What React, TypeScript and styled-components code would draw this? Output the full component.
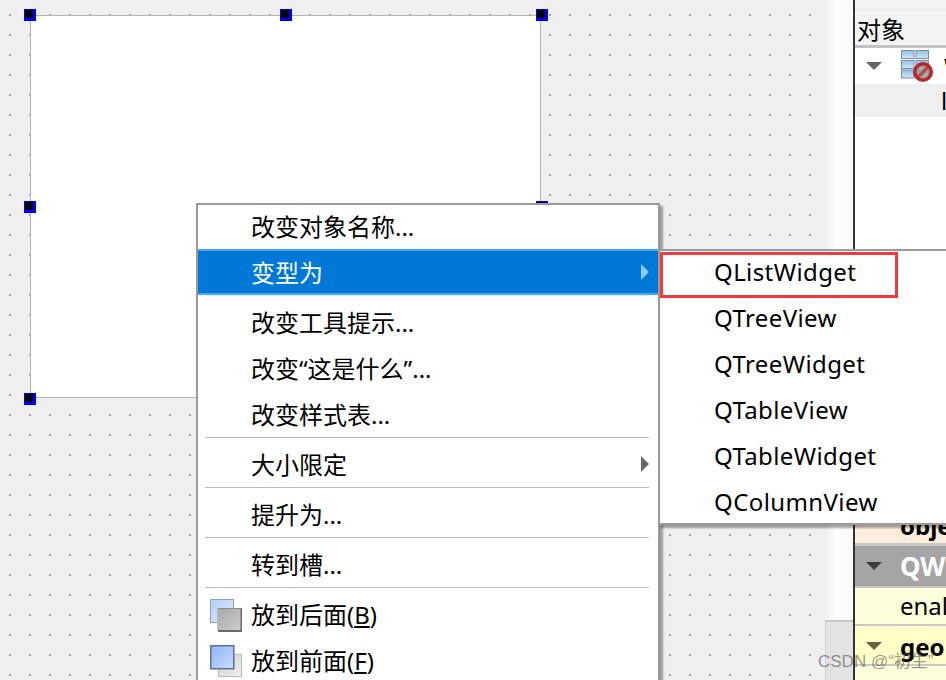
import React, { FC } from "react";
import styled, { createGlobalStyle } from "styled-components";

const GlobalStyle = createGlobalStyle`
  html, body {
    margin: 0;
    padding: 0;
    background: #efefef;
  }
  body {
    width: 946px;
    height: 680px;
    overflow: hidden;
    font-family: "Noto Sans", "Noto Sans CJK SC", sans-serif;
  }
`;

// selection handles around the form, the last two sit right at the menu edge
const HANDLES = [
  { x: 24, y: 9 },
  { x: 280, y: 9 },
  { x: 536, y: 9 },
  { x: 24, y: 201 },
  { x: 536, y: 201 },
  { x: 24, y: 393 },
];

const SUBMENU = ["QListWidget", "QTreeView", "QTreeWidget", "QTableView", "QTableWidget", "QColumnView"];

const BackIcon: FC = () => (
  <svg width="32" height="33" viewBox="0 0 32 33">
    <defs>
      <linearGradient id="backBlue" x1="0" y1="0" x2="1" y2="1">
        <stop offset="0" stopColor="#b5cdf8" />
        <stop offset="1" stopColor="#e3ebfb" />
      </linearGradient>
      <linearGradient id="backGray" x1="0" y1="0" x2="1" y2="1">
        <stop offset="0" stopColor="#a8a8a8" />
        <stop offset="1" stopColor="#cfcfcf" />
      </linearGradient>
    </defs>
    <rect x="0.5" y="0.5" width="23" height="23" fill="url(#backBlue)" stroke="#93a3bd" />
    <rect x="8.5" y="9.5" width="23" height="22" fill="url(#backGray)" stroke="#e2e2e2" />
    <path d="M8 32 H31.5 V9" fill="none" stroke="#6b6b6b" strokeWidth="2" />
    <path d="M8 32 V9.5 H31" fill="none" stroke="#8c8c8c" />
  </svg>
);

const FrontIcon: FC = () => (
  <svg width="32" height="33" viewBox="0 0 32 33">
    <defs>
      <linearGradient id="frontBlue" x1="0" y1="0" x2="1" y2="1">
        <stop offset="0" stopColor="#8fb6fa" />
        <stop offset="1" stopColor="#c9dcfb" />
      </linearGradient>
      <linearGradient id="frontGray" x1="0" y1="0" x2="1" y2="1">
        <stop offset="0" stopColor="#cfcfcf" />
        <stop offset="1" stopColor="#f0f0f0" />
      </linearGradient>
    </defs>
    <rect x="8.5" y="9.5" width="23" height="22" fill="url(#frontGray)" stroke="#b9b9b9" />
    <rect x="0.75" y="0.75" width="23" height="23" fill="url(#frontBlue)" stroke="#5d7194" strokeWidth="1.5" />
  </svg>
);

const TableIcon: FC = () => (
  <svg width="33" height="32" viewBox="0 0 33 32">
    <defs>
      <linearGradient id="cell" x1="0" y1="0" x2="0" y2="1">
        <stop offset="0" stopColor="#8cc2f0" />
        <stop offset="1" stopColor="#d8e6f2" />
      </linearGradient>
    </defs>
    <g fill="url(#cell)" stroke="#7b8ea6">
      <rect x="0.5" y="0.5" width="12.5" height="8" />
      <rect x="15" y="0.5" width="12.5" height="8" />
      <rect x="0.5" y="10.5" width="12.5" height="8" />
      <rect x="15" y="10.5" width="12.5" height="8" />
      <rect x="0.5" y="20" width="12.5" height="8" />
    </g>
    <circle cx="22" cy="22" r="10" fill="#b5282d" />
    <circle cx="22" cy="22" r="6.5" fill="#9c9c9c" />
    <path d="M17.5 26.5 L26.5 17.5" stroke="#c43a3e" strokeWidth="2.5" />
    <path d="M19 20 L22 17.5 M23 27 L27 23" stroke="#c9c9c9" strokeWidth="1" />
  </svg>
);

const App: FC = () => {
  return (
    <>
      <GlobalStyle />
      <Page>
        <Canvas>
          <Form />
          {HANDLES.map((h) => (
            <Handle key={`${h.x}-${h.y}`} $x={h.x} $y={h.y} />
          ))}
        </Canvas>
        <Scrollbar>
          <ScrollThumb />
          <ScrollTrack />
        </Scrollbar>
        <Inspector>
          <PanelTop />
          <ObjectHeader>对象</ObjectHeader>
          <TreeRow>
            <Arrow />
            <TreeIcon>
              <TableIcon />
            </TreeIcon>
            <TreeText>W</TreeText>
          </TreeRow>
          <TreeChild>l</TreeChild>
          <PanelBlank />
          <ObjectRow>obje</ObjectRow>
          <GroupRow>
            <SmallArrow />
            QW
          </GroupRow>
          <EnabledRow>enal</EnabledRow>
          <GeometryRow>
            <OliveArrow />
            geo
          </GeometryRow>
          <LastRow />
        </Inspector>

        <Menu>
          <MenuItem>改变对象名称...</MenuItem>
          <MenuItem $active>
            变型为
            <SubArrow $active />
          </MenuItem>
          <MenuGap />
          <MenuItem>改变工具提示...</MenuItem>
          <MenuItem>改变“这是什么”...</MenuItem>
          <MenuItem>改变样式表...</MenuItem>
          <Separator />
          <MenuItem>
            大小限定
            <SubArrow />
          </MenuItem>
          <Separator />
          <MenuItem>提升为...</MenuItem>
          <Separator />
          <MenuItem>转到槽...</MenuItem>
          <Separator />
          <MenuItem>
            <MenuIcon>
              <BackIcon />
            </MenuIcon>
            放到后面(<u>B</u>)
          </MenuItem>
          <MenuItem>
            <MenuIcon>
              <FrontIcon />
            </MenuIcon>
            放到前面(<u>F</u>)
          </MenuItem>
        </Menu>

        <SubMenu>
          {SUBMENU.map((name) => (
            <SubItem key={name}>{name}</SubItem>
          ))}
          <Highlight />
        </SubMenu>

        <Watermark>CSDN @“初生”</Watermark>
      </Page>
    </>
  );
};

const Page = styled.div`
  position: relative;
  display: flex;
  width: 946px;
  height: 680px;
  overflow: hidden;
  background: #efefef;
`;

const Canvas = styled.div`
  position: relative;
  width: 825px;
  height: 680px;
  flex-shrink: 0;
  box-sizing: border-box;
  padding: 15px 0 0 30px;
  background-color: #efefef;
  background-image: conic-gradient(at 2px 2px, transparent 270deg, #a3a3a3 0);
  background-size: 20px 20px;
  background-position: 9px 14px;
`;

const Form = styled.div`
  width: 511px;
  height: 383px;
  box-sizing: border-box;
  background: #fff;
  border: 1px solid #b4b4b4;
`;

const Handle = styled.div<{ $x: number; $y: number }>`
  position: absolute;
  left: ${(p) => p.$x}px;
  top: ${(p) => p.$y}px;
  width: 12px;
  height: 12px;
  box-sizing: border-box;
  background: #000;
  border-style: solid;
  border-color: #0000ff;
  border-width: 1px 3px 3px 1px;
`;

const Scrollbar = styled.div`
  width: 28px;
  height: 680px;
  display: flex;
  flex-direction: column;
  flex-shrink: 0;
`;

const ScrollThumb = styled.div`
  height: 622px;
  box-sizing: border-box;
  background: linear-gradient(to right, #efefef, #fdfdfd 40%, #f9f9f9);
  border-bottom: 2px solid #c8c8c8;
`;

const ScrollTrack = styled.div`
  flex: 1;
  background: #e3e3e3;
  border-left: 1px solid #d2d2d2;
`;

const Inspector = styled.div`
  flex: 1;
  display: flex;
  flex-direction: column;
  background: #fff;
  border-left: 2px solid #333;
  min-width: 0;
  overflow: hidden;
`;

const PanelTop = styled.div`
  height: 9px;
  background: #f4f4f4;
  border-bottom: 1px solid #e6e6e6;
`;

const ObjectHeader = styled.div`
  height: 38px;
  box-sizing: border-box;
  padding-left: 2px;
  font-size: 24px;
  line-height: 40px;
  color: #000;
  background: #f4f4f4;
  border-bottom: 3px solid #c4c4c4;
`;

const TreeRow = styled.div`
  display: flex;
  align-items: center;
  height: 36px;
  white-space: nowrap;
`;

const Arrow = styled.span`
  flex-shrink: 0;
  width: 0;
  height: 0;
  margin: 0 0 0 11px;
  border-left: 8px solid transparent;
  border-right: 8px solid transparent;
  border-top: 8px solid #666;
`;

const SmallArrow = styled(Arrow)`
  margin: 0 18px 0 0;
  border-top-color: #3c3c3c;
`;

const OliveArrow = styled(Arrow)`
  margin: 0 18px 0 0;
  border-top-color: #63633f;
`;

const TreeIcon = styled.span`
  flex-shrink: 0;
  margin-left: 19px;
  display: flex;
`;

const TreeText = styled.span`
  margin-left: 10px;
  font-size: 24px;
`;

const TreeChild = styled.div`
  height: 33px;
  padding-left: 86px;
  background: #efefef;
  font-size: 24px;
  line-height: 33px;
`;

const PanelBlank = styled.div`
  height: 388px;
`;

const PropRow = styled.div`
  display: flex;
  align-items: center;
  padding-left: 45px;
  box-sizing: border-box;
  border-bottom: 2px solid #c8c8c8;
  font-size: 24px;
  color: #000;
  white-space: nowrap;
`;

const ObjectRow = styled(PropRow)`
  height: 41px;
  padding-top: 3px;
  background: #fdeedd;
  border-bottom-width: 3px;
  font-weight: 700;
`;

const GroupRow = styled(PropRow)`
  height: 42px;
  padding-left: 11px;
  background: #a5a5a5;
  font-size: 26px;
  font-weight: 700;
  color: #fff;
`;

const EnabledRow = styled(PropRow)`
  height: 38px;
  padding-bottom: 2px;
  background: #ffffdc;
`;

const GeometryRow = styled(PropRow)`
  height: 40px;
  padding-top: 2px;
  padding-left: 11px;
  background: #ffffc8;
  font-weight: 700;
`;

const LastRow = styled(PropRow)`
  flex: 1;
  background: #ffffdc;
  border-bottom: none;
`;

const Menu = styled.div`
  position: absolute;
  left: 196px;
  top: 203px;
  width: 464px;
  height: 500px;
  box-sizing: border-box;
  background: #fff;
  border: 2px solid #9a9a9a;
  box-shadow: 3px 3px 2px rgba(0, 0, 0, 0.35);
`;

const MenuItem = styled.div<{ $active?: boolean }>`
  position: relative;
  height: 46px;
  box-sizing: border-box;
  padding-left: 53px;
  font-size: 24px;
  line-height: 48px;
  color: ${(p) => (p.$active ? "#fff" : "#000")};
  white-space: nowrap;
  &:first-child {
    margin-top: -2px;
  }
  ${(p) =>
    p.$active &&
    `
    background: #0078d7;
    border-top: 2px solid #45a9ee;
    border-bottom: 2px solid #45a9ee;
    line-height: 44px;
  `}
`;

const MenuGap = styled.div`
  height: 4px;
  box-sizing: border-box;
  margin: 0 9px 0 7px;
  border-top: 1px solid #d5e9f8;
`;

const SubArrow = styled.span<{ $active?: boolean }>`
  position: absolute;
  right: 9px;
  top: 50%;
  transform: translateY(-50%);
  width: 0;
  height: 0;
  border-top: 8px solid transparent;
  border-bottom: 8px solid transparent;
  border-left: 8px solid ${(p) => (p.$active ? "#94c6ec" : "#666")};
`;

const Separator = styled.div`
  height: 4px;
  box-sizing: border-box;
  margin: 0 9px 0 7px;
  border-top: 1px solid #bdbdbd;
`;

const MenuIcon = styled.span`
  position: absolute;
  left: 12px;
  top: 8px;
  display: flex;
`;

const SubMenu = styled.div`
  position: absolute;
  left: 658px;
  top: 249px;
  width: 300px;
  height: 276px;
  box-sizing: border-box;
  background: #fff;
  border: 2px solid #9a9a9a;
  box-shadow: 3px 3px 2px rgba(0, 0, 0, 0.35);
`;

const SubItem = styled.div`
  height: 46px;
  padding-left: 54px;
  font-size: 24px;
  letter-spacing: 0.4px;
  line-height: 42px;
  color: #000;
`;

const Highlight = styled.div`
  position: absolute;
  left: 0;
  top: 1px;
  width: 238px;
  height: 46px;
  box-sizing: border-box;
  border: 3px solid #f5383b;
`;

const Watermark = styled.div`
  position: absolute;
  left: 818px;
  top: 650px;
  font-family: "Liberation Sans", "Noto Sans CJK SC", sans-serif;
  font-size: 17px;
  line-height: 24px;
  color: rgba(80, 80, 80, 0.6);
  white-space: nowrap;
`;

export default App;
